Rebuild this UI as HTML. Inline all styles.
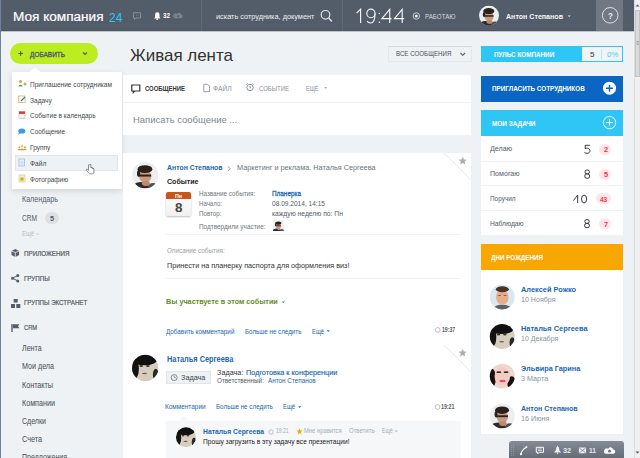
<!DOCTYPE html>
<html><head><meta charset="utf-8">
<style>
*{margin:0;padding:0;box-sizing:border-box}
html,body{width:640px;height:458px;overflow:hidden;background:#eef2f4;font-family:"Liberation Sans",sans-serif}
.a{position:absolute}
.t{position:absolute;white-space:pre;transform-origin:0 0;font-family:"Liberation Sans",sans-serif}
svg{position:absolute;overflow:visible}
</style></head><body>
<!-- left edge -->
<div class="a" style="left:0;top:0;width:1px;height:458px;background:#6f819c"></div>
<!-- header -->
<div class="a" style="left:1px;top:0;width:633px;height:31px;background:#535c69;border-bottom:1px solid #4d5561"></div>
<div class="a" style="left:1px;top:31px;width:633px;height:1px;background:rgba(83,92,105,.3)"></div>
<div class="a" style="left:201px;top:0;width:1px;height:31px;background:#616a76"></div>
<div class="a" style="left:342px;top:0;width:1px;height:31px;background:#616a76"></div>
<div class="a" style="left:596px;top:0;width:27px;height:31px;background:#717985"></div>
<svg style="left:0;top:0" width="640" height="40">
 <!-- chat icon -->
 <path d="M133.5 12.7h7v5.3h-4.5l-1.5 1.5v-1.5h-1z" fill="none" stroke="#8a929c" stroke-width="0.9"/><path d="M135.8 15.2h.8M137.6 15.2h.8" stroke="#8a929c" stroke-width="0.8"/>
 <!-- bell -->
 <path d="M154 18.5h6.5l-1-1.2v-2.8a2.2 2.2 0 0 0-4.4 0v2.8z" fill="#fff"/>
 <circle cx="157.2" cy="19.2" r="0.9" fill="#fff"/>
 <!-- cloud -->
 <path d="M174.5 18.2h6.3a1.8 1.8 0 0 0 .2-3.6a2.2 2.2 0 0 0-4.1-.7a1.8 1.8 0 0 0-2.4 4.3z" fill="#7a828c"/><circle cx="178" cy="16.3" r="1" fill="#535c69"/>
 <!-- search -->
 <circle cx="325.5" cy="14.8" r="4.3" fill="none" stroke="#dfe2e5" stroke-width="1.2"/>
 <path d="M328.6 18l3.4 3.4" stroke="#dfe2e5" stroke-width="1.4"/>
 <!-- rec -->
 <circle cx="416.3" cy="16" r="3.2" fill="none" stroke="#d0d4d8" stroke-width="0.9"/>
 <circle cx="416.3" cy="16" r="1.5" fill="#e5e7ea"/>
 <!-- caret -->
 <path d="M567.6 15.4h3.2l-1.6 1.7z" fill="#eceef0"/>
 <!-- help -->
 <circle cx="610.2" cy="15.3" r="7.8" fill="none" stroke="#e8eaec" stroke-width="0.9"/>
</svg>
<svg style="left:0;top:0" width="640" height="40">
 <g fill="none" stroke="#f4f6f8" stroke-width="1.15" stroke-linecap="butt">
  <path d="M356.6 13.2L360.6 9.2V23"/>
  <ellipse cx="370.9" cy="13.4" rx="4.1" ry="4.3"/>
  <path d="M375 13.4C375 19.5 373.6 23 370.6 23C368.9 23 367.7 22.2 367.1 21"/>
  <path d="M389.7 23V9.3L381.9 18.6H391.6"/>
  <path d="M402.2 23V9.3L394.4 18.6H404.1"/>
 </g>
 <circle cx="379.4" cy="13.6" r="0.75" fill="#f4f6f8"/>
 <circle cx="379.4" cy="22.2" r="0.75" fill="#f4f6f8"/>
</svg>
<!-- avatar header -->


<!-- scrollbar -->
<div class="a" style="left:634px;top:0;width:6px;height:458px;background:#f0f0f0;border-left:1px solid #dcdcdc"></div>
<div class="a" style="left:635px;top:10px;width:5px;height:67px;background:#dadada;border:1px solid #c4c4c4"></div>
<svg style="left:0;top:0" width="640" height="458"><path d="M635.5 6.5l2-2l2 2z M635.5 451.5l2 2l2-2z" fill="#555"/><path d="M636.5 41.5h2.5M636.5 43h2.5M636.5 44.5h2.5" stroke="#888" stroke-width="0.6"/></svg>

<!-- green button -->
<div class="a" style="left:10px;top:43px;width:88px;height:21px;border-radius:11px;background:#bbed21"></div>
<svg style="left:0;top:0" width="120" height="70">
 <path d="M18.3 53.5h4.6M20.6 51.2v4.6" stroke="#535c69" stroke-width="1.2"/>
 <path d="M83 52.5l2 2l2-2" fill="none" stroke="#535c69" stroke-width="1.1"/>
</svg>

<!-- popup -->
<div class="a" style="left:12px;top:72px;width:110px;height:117px;background:#fff;box-shadow:0 2px 6px rgba(0,0,0,.12)"></div>
<svg style="left:0;top:0" width="130" height="200">
 <path d="M29 72.5L35 67.5L41 72.5z" fill="#fff"/>
</svg>
<div class="a" style="left:15px;top:155px;width:103px;height:16px;background:#eef2f4;border:1px solid #e2e6ea"></div>
<!-- popup icons -->
<svg style="left:0;top:0" width="130" height="200">
 <circle cx="20.5" cy="81.5" r="1.6" fill="#e0a040"/>
 <path d="M18.2 86.5a2.4 2.4 0 0 1 4.6 0z" fill="#6aa03a"/>
 <path d="M23.5 84h3M25 82.5v3" stroke="#6aa03a" stroke-width="0.9"/>
 <rect x="18.5" y="96" width="6.5" height="6.5" fill="#fff" stroke="#e8b050" stroke-width="0.8"/>
 <path d="M21 101l4-4" stroke="#3070c0" stroke-width="1.1"/>
 <rect x="19" y="111.5" width="6" height="7" fill="#f2f2f2" stroke="#bbb" stroke-width="0.6"/>
 <rect x="19" y="111.5" width="6" height="2.4" fill="#d84030"/>
 <ellipse cx="21.8" cy="131" rx="3.6" ry="2.6" fill="#3a9ee0"/>
 <path d="M19 132.5l-1 2l2.5-1z" fill="#3a9ee0"/>
 <circle cx="19.4" cy="147.3" r="1" fill="#e8a030"/><circle cx="22.2" cy="146.3" r="1.1" fill="#f0b040"/><circle cx="25" cy="147.3" r="1" fill="#e8a030"/>
 <path d="M17.8 150.3a1.6 1.6 0 0 1 3.2 0z M20.4 150.3a1.8 1.8 0 0 1 3.6 0z M23.4 150.3a1.6 1.6 0 0 1 3.2 0z" fill="#d8902a"/>
 <rect x="19" y="159" width="5.5" height="7" fill="#e8f1fb" stroke="#8fb8e6" stroke-width="0.7"/>
 <path d="M20.5 162h3M20.5 164h3" stroke="#8fb8e6" stroke-width="0.6"/>
 <rect x="19" y="175" width="6" height="7" fill="#f5f0d8" stroke="#c8c090" stroke-width="0.6"/>
 <rect x="20.3" y="177.5" width="3.4" height="3.2" fill="#e0b000"/>
</svg>
<!-- hand cursor -->
<svg style="left:0;top:0" width="130" height="200">
<g transform="translate(88.5 164.8) scale(0.85) translate(-89 -165.5)"> <path d="M89 165.5v6.5l-1.3-1.2c-.8-.6-1.7.2-1.1 1l2.6 3.5c.5.6 1 .9 1.8.9h2.4c1.3 0 2-1 2-2.2v-3.6c0-.6-.9-.6-.9 0v-.7c0-.6-.9-.6-.9 0v-.5c0-.6-.9-.6-.9 0v-.4c0-.6-.9-.6-.9 0v-3.3c0-.7-.8-.7-.8 0z" fill="#fff" stroke="#222" stroke-width="0.6"/></g>
</svg>

<!-- CRM badge -->
<svg style="left:0;top:0" width="130" height="340"><path d="M36.5 234h2.2" stroke="#b8bec4" stroke-width="0.8"/></svg>
<div class="a" style="left:45px;top:212px;width:14px;height:12px;border-radius:6px;background:#dde1e5"></div>

<!-- sidebar section icons -->
<svg style="left:0;top:0" width="130" height="340">
 <path d="M11.5 251l3.8-2l3.8 2v4l-3.8 2l-3.8-2z" fill="#535c69"/>
 <path d="M15.3 252.5v4.5M11.5 251l3.8 1.5l3.8-1.5" stroke="#eef2f4" stroke-width="0.8" fill="none"/>
 <circle cx="12.5" cy="278.2" r="1.5" fill="#535c69"/><circle cx="17.8" cy="275.5" r="1.5" fill="#535c69"/><circle cx="17.8" cy="280.9" r="1.5" fill="#535c69"/>
 <path d="M12.5 278.2l5.3-2.7M12.5 278.2l5.3 2.7" stroke="#535c69" stroke-width="1"/>
 <rect x="13.7" y="299" width="4" height="3.5" fill="#535c69"/>
 <rect x="11" y="304" width="4" height="4" fill="#535c69"/>
 <rect x="16.3" y="304" width="4" height="4" fill="#535c69"/>
 <rect x="11.3" y="324" width="1.4" height="8" fill="#535c69"/>
 <path d="M13 324.3h6.5l-1.5 2l1.5 2h-6.5z" fill="#535c69"/>
</svg>

<!-- main title filter -->
<div class="a" style="left:388px;top:46px;width:84px;height:16.3px;border:1px solid #e3e7ea;border-top-color:#d6dbdf;background:#eef2f4"></div>
<svg style="left:0;top:0" width="640" height="140">
 <path d="M460.5 53l2.3 2.3l2.3-2.3" fill="none" stroke="#535c69" stroke-width="1.1"/>
</svg>

<!-- post form card -->
<div class="a" style="left:123px;top:75px;width:348px;height:60px;background:#fff"></div>
<div class="a" style="left:123px;top:102px;width:348px;height:1px;background:#eef0f2"></div>
<svg style="left:0;top:0" width="640" height="140">
 <path d="M131.8 85h8v6h-5l-1.5 1.5v-1.5h-1.5z" fill="none" stroke="#333" stroke-width="1.2"/>
 <path d="M203.8 84.3h3.8l2 2v5.4h-5.8z" fill="none" stroke="#8a929c" stroke-width="0.9"/>
 <circle cx="250" cy="87.5" r="3.2" fill="none" stroke="#8a929c" stroke-width="1"/>
 <path d="M246.3 84.6l1.5-1.2M253.7 84.6l-1.5-1.2M250 86v1.7h1.2" stroke="#8a929c" stroke-width="0.9" fill="none"/>
 <path d="M324.3 87.2h2.8l-1.4 1.6z" fill="#8a929c"/>
</svg>

<!-- feed card -->
<div class="a" style="left:123px;top:153px;width:348px;height:305px;background:#fff"></div>
<svg style="left:0;top:0" width="640" height="458">
 <path d="M444 153L471 180" stroke="#e2e5e8" stroke-width="0.8"/>
 <path d="M462.7 156.8l1.2 2.6l2.8.3l-2.1 1.9l.6 2.8l-2.5-1.4l-2.5 1.4l.6-2.8l-2.1-1.9l2.8-.3z" fill="#a8adb4"/>
 <path d="M444 345L471 372" stroke="#e2e5e8" stroke-width="0.8"/>
 <path d="M462.6 348.8l1.2 2.6l2.8.3l-2.1 1.9l.6 2.8l-2.5-1.4l-2.5 1.4l.6-2.8l-2.1-1.9l2.8-.3z" fill="#a8adb4"/>
 <path d="M166 234.5h295M166 278.5h295" stroke="#f0f2f4" stroke-width="1"/>
 
 <path d="M227.8 166.5l2.6 2.2l-2.6 2.2" fill="none" stroke="#8a929c" stroke-width="0.9"/>
 <path d="M281.8 301.6h3l-1.5 1.7z" fill="#5f8f1f"/>
 <path d="M326.7 330.3h3l-1.5 1.7z" fill="#2067b0"/>
 <circle cx="437.8" cy="330" r="2.4" fill="none" stroke="#a8adb4" stroke-width="0.8"/>
 <path d="M298.2 406.3h3l-1.5 1.7z" fill="#2067b0"/>
 <circle cx="437.5" cy="407" r="2.4" fill="none" stroke="#a8adb4" stroke-width="0.8"/>
</svg>
<!-- avatars in feed -->

<!-- calendar -->
<div class="a" style="left:166px;top:191.5px;width:25px;height:24.5px;background:linear-gradient(#fff,#f0f0f0);box-shadow:0 1px 2px rgba(0,0,0,.25);border-radius:2px"></div>
<div class="a" style="left:166px;top:191.5px;width:25px;height:7px;background:#c9541c;border-radius:2px 2px 0 0"></div>



<!-- task button -->
<div class="a" style="left:166px;top:371px;width:45px;height:13px;background:#eef2f4;border:1px solid #e2e6ea"></div>
<svg style="left:0;top:0" width="640" height="458">
 <circle cx="174.2" cy="377.6" r="3" fill="none" stroke="#6b737d" stroke-width="0.8"/>
 <path d="M174.2 375.8v1.9h1.4" stroke="#6b737d" stroke-width="0.7" fill="none"/>
</svg>
<!-- comments block -->
<div class="a" style="left:166px;top:421px;width:295px;height:37px;background:#f5f7f8"></div>
<svg style="left:0;top:0" width="640" height="458">
 <path d="M178.5 421L183.7 416L188.9 421z" fill="#f5f7f8"/>
 <circle cx="271.1" cy="432" r="2.2" fill="none" stroke="#a8adb4" stroke-width="0.7"/>
 <path d="M299.6 428.4l.9 2l2.2.2l-1.7 1.5l.5 2.1l-1.9-1.1l-1.9 1.1l.5-2.1l-1.7-1.5l2.2-.2z" fill="#f7a700"/>
 <path d="M394.8 430.6h2.8l-1.4 1.6z" fill="#a8adb4"/>
</svg>


<!-- right column -->
<div class="a" style="left:481px;top:46px;width:142px;height:16px;background:#2fc6f6"></div>
<div class="a" style="left:582px;top:47px;width:40px;height:13.5px;background:#f0f4f6"></div>
<div class="a" style="left:601px;top:49px;width:1px;height:9.5px;background:#bfe6f5"></div>
<div class="a" style="left:481px;top:76px;width:142px;height:25.5px;background:#0b66c3"></div>
<svg style="left:0;top:0" width="640" height="140">
 <circle cx="609.5" cy="88.2" r="6.5" fill="#fff"/>
 <path d="M606 88.2h7M609.5 84.7v7" stroke="#0b66c3" stroke-width="1.4"/>
</svg>
<div class="a" style="left:481px;top:110px;width:142px;height:26px;background:#2fc6f6"></div>
<svg style="left:0;top:0" width="640" height="140">
 <circle cx="609.5" cy="122.6" r="6.2" fill="none" stroke="#fff" stroke-width="0.9"/>
 <path d="M606 122.6h7M609.5 119.1v7" stroke="#fff" stroke-width="1"/>
</svg>
<div class="a" style="left:481px;top:136px;width:142px;height:99px;background:#fff"></div>
<div class="a" style="left:481px;top:160.5px;width:142px;height:1px;background:#f0f2f4"></div>
<div class="a" style="left:481px;top:185.3px;width:142px;height:1px;background:#f0f2f4"></div>
<div class="a" style="left:481px;top:210.3px;width:142px;height:1px;background:#f0f2f4"></div>
<div class="a" style="left:599.3px;top:143.6px;width:11.4px;height:11px;border-radius:6px;background:#fde5ea"></div>
<div class="a" style="left:599.3px;top:168.6px;width:11.4px;height:11px;border-radius:6px;background:#fde5ea"></div>
<div class="a" style="left:595.6px;top:193.3px;width:15.3px;height:11px;border-radius:6px;background:#fde5ea"></div>
<div class="a" style="left:599.3px;top:218.3px;width:11.4px;height:11px;border-radius:6px;background:#fde5ea"></div>

<div class="a" style="left:481px;top:244px;width:142px;height:26.5px;background:#f7a700"></div>
<div class="a" style="left:481px;top:270px;width:142px;height:163.5px;background:#fff"></div>





<!-- bottom toolbar -->
<div class="a" style="left:508.5px;top:441px;width:115.5px;height:17px;border-radius:3px 3px 0 0;background:linear-gradient(#848b94,#646c77)"></div>
<svg style="left:0;top:0" width="640" height="458">
 <path d="M511.5 445v11M513.5 445v11" stroke="#9aa1a9" stroke-width="0.7" stroke-dasharray="1 1"/>
 <path d="M520.8 454.8c.6-3.6 2.6-6.2 5.8-7.6" stroke="#fff" stroke-width="1.1" fill="none"/>
 <path d="M520.2 452.8l1.8 .6l-.6 1.9l-1.4-.3z M525.3 446.6l1.7-.6l.5 1.6l-1.6.7z" fill="#fff"/>
 <path d="M536.3 447.3h7.2v5h-4.3l-1.4 1.4v-1.4h-1.5z" fill="none" stroke="#fff" stroke-width="1"/>
 <path d="M537.9 449h4M537.9 450.6h4" stroke="#fff" stroke-width="0.7"/>
 <path d="M553.8 452.6h7.4l-1.6-1.8l-.6-2.6a1.4 1.4 0 0 0-2.8 0l-.6 2.6z" fill="#eef0f2"/>
 <path d="M557.5 445.8v1.4M557.5 452.6v1.6" stroke="#eef0f2" stroke-width="0.9"/>
 <rect x="578.9" y="447.5" width="7.2" height="5.8" fill="#eef0f2"/>
 <path d="M579.3 448l6.4 4.8M585.7 448l-6.4 4.8" stroke="#7a828c" stroke-width="0.8" fill="none"/>
 <path d="M605.5 453.8h7.5a2.1 2.1 0 0 0 .2-4.2a2.7 2.7 0 0 0-5-.9a2.1 2.1 0 0 0-2.7 5.1z" fill="#fff"/>
 <circle cx="609.5" cy="451.2" r="1.4" fill="#646c77"/>
</svg>

<svg style="left:0;top:0" width="640" height="458">
 <g fill="none" stroke="#2c3038" stroke-width="0.95">
  <path d="M589.9 145.3H585.2V148.6C586 148.2 586.8 148.1 587.5 148.2C589.2 148.5 590 149.6 590 150.9C590 152.4 588.8 153.3 587.1 153.3C586 153.3 585 152.9 584.4 152.3"/>
  <ellipse cx="587.2" cy="171.94" rx="2.24" ry="2.04"/><ellipse cx="587.2" cy="176.11" rx="2.57" ry="2.29"/>
  <path d="M573.4 200.6L577.7 195V203"/>
  <ellipse cx="584.1" cy="199" rx="2.55" ry="3.95"/>
  <ellipse cx="587.0" cy="221.49" rx="2.19" ry="1.99"/><ellipse cx="587.0" cy="225.56" rx="2.51" ry="2.24"/>
 </g>
</svg>
<svg style="left:0;top:0" width="640" height="458"><defs><clipPath id="avc0"><circle cx="489" cy="15.6" r="10"/></clipPath></defs><g clip-path="url(#avc0)"><rect x="479" y="5.6" width="20" height="20" fill="#eceef0"/><ellipse cx="485.50" cy="25.10" rx="6.50" ry="4.20" fill="#2b2b2b"/><ellipse cx="495.00" cy="24.60" rx="4.00" ry="3.00" fill="#4a5056"/><ellipse cx="489.00" cy="16.40" rx="4.60" ry="5.00" fill="#c99a7e"/><ellipse cx="488.80" cy="11.10" rx="5.60" ry="3.00" fill="#2a211d"/><ellipse cx="484.00" cy="14.40" rx="1.20" ry="2.50" fill="#2a211d"/><rect x="484.00" y="15.20" width="9.50" height="1.50" fill="#2a2220"/><ellipse cx="489.50" cy="21.80" rx="3.00" ry="2.00" fill="#c08a6e"/></g></svg>
<svg style="left:0;top:0" width="640" height="458"><defs><clipPath id="avc1"><circle cx="145.2" cy="175.1" r="13.2"/></clipPath></defs><g clip-path="url(#avc1)"><rect x="132.0" y="161.9" width="26.4" height="26.4" fill="#eceef0"/><ellipse cx="140.58" cy="187.64" rx="8.58" ry="5.54" fill="#2b2b2b"/><ellipse cx="153.12" cy="186.98" rx="5.28" ry="3.96" fill="#4a5056"/><ellipse cx="145.20" cy="176.16" rx="6.07" ry="6.60" fill="#c99a7e"/><ellipse cx="144.94" cy="169.16" rx="7.39" ry="3.96" fill="#2a211d"/><ellipse cx="138.60" cy="173.52" rx="1.58" ry="3.30" fill="#2a211d"/><rect x="138.60" y="174.57" width="12.54" height="1.98" fill="#2a2220"/><ellipse cx="145.86" cy="183.28" rx="3.96" ry="2.64" fill="#c08a6e"/></g></svg>
<svg style="left:0;top:0" width="640" height="458"><defs><clipPath id="avc2"><rect x="272.9" y="220.1" width="11.0" height="11.0"/></clipPath></defs><g clip-path="url(#avc2)"><rect x="272.9" y="220.1" width="11.0" height="11.0" fill="#eceef0"/><ellipse cx="276.47" cy="230.82" rx="3.58" ry="2.31" fill="#2b2b2b"/><ellipse cx="281.70" cy="230.55" rx="2.20" ry="1.65" fill="#4a5056"/><ellipse cx="278.40" cy="226.04" rx="2.53" ry="2.75" fill="#c99a7e"/><ellipse cx="278.29" cy="223.12" rx="3.08" ry="1.65" fill="#2a211d"/><ellipse cx="275.65" cy="224.94" rx="0.66" ry="1.38" fill="#2a211d"/><rect x="275.65" y="225.38" width="5.22" height="0.82" fill="#2a2220"/><ellipse cx="278.67" cy="229.01" rx="1.65" ry="1.10" fill="#c08a6e"/></g></svg>
<svg style="left:0;top:0" width="640" height="458"><defs><clipPath id="avc3"><circle cx="145.2" cy="368" r="13.2"/></clipPath></defs><g clip-path="url(#avc3)"><rect x="132.0" y="354.8" width="26.4" height="26.4" fill="#d6cdbf"/><ellipse cx="144.54" cy="359.82" rx="12.54" ry="5.54" fill="#111010"/><ellipse cx="134.90" cy="368.66" rx="3.96" ry="9.90" fill="#141212"/><ellipse cx="155.76" cy="374.60" rx="2.90" ry="5.94" fill="#2a2826"/><ellipse cx="141.24" cy="366.02" rx="1.85" ry="0.92" fill="#3a3430"/><ellipse cx="147.84" cy="366.02" rx="1.85" ry="0.92" fill="#3a3430"/><ellipse cx="144.54" cy="373.54" rx="2.64" ry="0.79" fill="#6a625a"/></g></svg>
<svg style="left:0;top:0" width="640" height="458"><defs><clipPath id="avc4"><circle cx="186" cy="437.2" r="10"/></clipPath></defs><g clip-path="url(#avc4)"><rect x="176" y="427.2" width="20" height="20" fill="#d6cdbf"/><ellipse cx="185.50" cy="431.00" rx="9.50" ry="4.20" fill="#111010"/><ellipse cx="178.20" cy="437.70" rx="3.00" ry="7.50" fill="#141212"/><ellipse cx="194.00" cy="442.20" rx="2.20" ry="4.50" fill="#2a2826"/><ellipse cx="183.00" cy="435.70" rx="1.40" ry="0.70" fill="#3a3430"/><ellipse cx="188.00" cy="435.70" rx="1.40" ry="0.70" fill="#3a3430"/><ellipse cx="185.50" cy="441.40" rx="2.00" ry="0.60" fill="#6a625a"/></g></svg>
<svg style="left:0;top:0" width="640" height="458"><defs><clipPath id="avc5"><circle cx="502.3" cy="297" r="12.5"/></clipPath></defs><g clip-path="url(#avc5)"><rect x="489.8" y="284.5" width="25.0" height="25.0" fill="#d8e9f2"/><ellipse cx="502.30" cy="309.50" rx="10.00" ry="4.75" fill="#5e6266"/><ellipse cx="502.30" cy="297.25" rx="6.25" ry="7.75" fill="#e6ad8e"/><ellipse cx="502.30" cy="289.25" rx="6.50" ry="3.00" fill="#4a3424"/><ellipse cx="499.55" cy="295.50" rx="1.50" ry="0.62" fill="#7a5040"/><ellipse cx="505.05" cy="295.50" rx="1.50" ry="0.62" fill="#7a5040"/></g></svg>
<svg style="left:0;top:0" width="640" height="458"><defs><clipPath id="avc6"><circle cx="502.3" cy="336.5" r="12.5"/></clipPath></defs><g clip-path="url(#avc6)"><rect x="489.8" y="324.0" width="25.0" height="25.0" fill="#d6cdbf"/><ellipse cx="501.68" cy="328.75" rx="11.88" ry="5.25" fill="#111010"/><ellipse cx="492.55" cy="337.12" rx="3.75" ry="9.38" fill="#141212"/><ellipse cx="512.30" cy="342.75" rx="2.75" ry="5.62" fill="#2a2826"/><ellipse cx="498.55" cy="334.62" rx="1.75" ry="0.88" fill="#3a3430"/><ellipse cx="504.80" cy="334.62" rx="1.75" ry="0.88" fill="#3a3430"/><ellipse cx="501.68" cy="341.75" rx="2.50" ry="0.75" fill="#6a625a"/></g></svg>
<svg style="left:0;top:0" width="640" height="458"><defs><clipPath id="avc7"><circle cx="502.3" cy="376.2" r="12.5"/></clipPath></defs><g clip-path="url(#avc7)"><rect x="489.8" y="363.7" width="25.0" height="25.0" fill="#efd6d0"/><ellipse cx="492.05" cy="378.07" rx="3.75" ry="9.38" fill="#151111"/><ellipse cx="511.68" cy="383.07" rx="4.38" ry="6.88" fill="#151111"/><ellipse cx="502.30" cy="376.45" rx="7.75" ry="9.38" fill="#f2cec2"/><ellipse cx="498.80" cy="372.20" rx="2.50" ry="0.88" fill="#3a2a30"/><ellipse cx="506.05" cy="372.20" rx="2.50" ry="0.88" fill="#3a2a30"/><ellipse cx="502.55" cy="380.95" rx="3.12" ry="1.25" fill="#ee4a74"/></g></svg>
<svg style="left:0;top:0" width="640" height="458"><defs><clipPath id="avc8"><circle cx="502.3" cy="415.8" r="12.5"/></clipPath></defs><g clip-path="url(#avc8)"><rect x="489.8" y="403.3" width="25.0" height="25.0" fill="#eceef0"/><ellipse cx="497.93" cy="427.68" rx="8.12" ry="5.25" fill="#2b2b2b"/><ellipse cx="509.80" cy="427.05" rx="5.00" ry="3.75" fill="#4a5056"/><ellipse cx="502.30" cy="416.80" rx="5.75" ry="6.25" fill="#c99a7e"/><ellipse cx="502.05" cy="410.18" rx="7.00" ry="3.75" fill="#2a211d"/><ellipse cx="496.05" cy="414.30" rx="1.50" ry="3.12" fill="#2a211d"/><rect x="496.05" y="415.30" width="11.88" height="1.88" fill="#2a2220"/><ellipse cx="502.93" cy="423.55" rx="3.75" ry="2.50" fill="#c08a6e"/></g></svg>
<span class="t" style="left:13.10px;top:10.72px;font-size:12.5px;line-height:12.5px;font-weight:400;color:#fff;transform:scaleX(1.0867);-webkit-text-stroke:0.2px #fff;">Моя компания</span>
<span class="t" style="left:108.60px;top:10.70px;font-size:13px;line-height:13px;font-weight:400;color:#2fc6f6;transform:scaleX(0.9192);">24</span>
<span class="t" style="left:162.80px;top:13.20px;font-size:6.5px;line-height:6.5px;font-weight:700;color:#fff;transform:scaleX(0.9676);">32</span>
<span class="t" style="left:215.60px;top:12.53px;font-size:8px;line-height:8px;font-weight:400;color:#eef0f2;transform:scaleX(0.9164);">искать сотрудника, документ</span>
<span class="t" style="left:424.70px;top:13.54px;font-size:6.8px;line-height:6.8px;font-weight:400;color:#d6dade;transform:scaleX(0.9105);">РАБОТАЮ</span>
<span class="t" style="left:506.00px;top:12.98px;font-size:7.7px;line-height:7.7px;font-weight:700;color:#f6f7f8;transform:scaleX(0.9205);">Антон Степанов</span>
<span class="t" style="left:607.80px;top:11.58px;font-size:9px;line-height:9px;font-weight:700;color:#eceef0;transform:scaleX(0.8727);">?</span>
<span class="t" style="left:30.00px;top:50.77px;font-size:7px;line-height:7px;font-weight:400;color:#535c69;transform:scaleX(0.9241);-webkit-text-stroke:0.35px #535c69;">ДОБАВИТЬ</span>
<span class="t" style="left:30.00px;top:80.93px;font-size:8px;line-height:8px;font-weight:400;color:#3f4650;transform:scaleX(0.8178);">Приглашение сотрудникам</span>
<span class="t" style="left:30.00px;top:96.70px;font-size:8px;line-height:8px;font-weight:400;color:#3f4650;transform:scaleX(0.8261);">Задачу</span>
<span class="t" style="left:30.00px;top:112.47px;font-size:8px;line-height:8px;font-weight:400;color:#3f4650;transform:scaleX(0.8063);">Событие в календарь</span>
<span class="t" style="left:30.00px;top:128.24px;font-size:8px;line-height:8px;font-weight:400;color:#3f4650;transform:scaleX(0.8037);">Сообщение</span>
<span class="t" style="left:30.00px;top:144.01px;font-size:8px;line-height:8px;font-weight:400;color:#3f4650;transform:scaleX(0.8191);">Группу</span>
<span class="t" style="left:30.00px;top:159.78px;font-size:8px;line-height:8px;font-weight:400;color:#3f4650;transform:scaleX(0.8286);">Файл</span>
<span class="t" style="left:30.00px;top:175.55px;font-size:8px;line-height:8px;font-weight:400;color:#3f4650;transform:scaleX(0.8042);">Фотографию</span>
<span class="t" style="left:22.00px;top:195.30px;font-size:8.5px;line-height:8.5px;font-weight:400;color:#535c69;transform:scaleX(0.8390);">Календарь</span>
<span class="t" style="left:22.00px;top:213.50px;font-size:8.5px;line-height:8.5px;font-weight:400;color:#535c69;transform:scaleX(0.7748);">CRM</span>
<span class="t" style="left:50.00px;top:215.27px;font-size:7px;line-height:7px;font-weight:700;color:#535c69;transform:scaleX(1.0240);">5</span>
<span class="t" style="left:22.00px;top:230.15px;font-size:7.5px;line-height:7.5px;font-weight:400;color:#b8bec4;transform:scaleX(0.7813);">Ещё</span>
<span class="t" style="left:23.50px;top:250.53px;font-size:6.7px;line-height:6.7px;font-weight:400;color:#535c69;transform:scaleX(0.9357);-webkit-text-stroke:0.2px #535c69;">ПРИЛОЖЕНИЯ</span>
<span class="t" style="left:23.50px;top:275.53px;font-size:6.7px;line-height:6.7px;font-weight:400;color:#535c69;transform:scaleX(0.9272);-webkit-text-stroke:0.2px #535c69;">ГРУППЫ</span>
<span class="t" style="left:23.50px;top:300.03px;font-size:6.7px;line-height:6.7px;font-weight:400;color:#535c69;transform:scaleX(0.9193);-webkit-text-stroke:0.2px #535c69;">ГРУППЫ ЭКСТРАНЕТ</span>
<span class="t" style="left:23.50px;top:325.33px;font-size:6.7px;line-height:6.7px;font-weight:400;color:#535c69;transform:scaleX(0.8599);-webkit-text-stroke:0.2px #535c69;">CRM</span>
<span class="t" style="left:22.00px;top:343.80px;font-size:8.5px;line-height:8.5px;font-weight:400;color:#454b55;transform:scaleX(0.8329);">Лента</span>
<span class="t" style="left:22.00px;top:362.00px;font-size:8.5px;line-height:8.5px;font-weight:400;color:#454b55;transform:scaleX(0.8397);">Мои дела</span>
<span class="t" style="left:22.00px;top:380.50px;font-size:8.5px;line-height:8.5px;font-weight:400;color:#454b55;transform:scaleX(0.8443);">Контакты</span>
<span class="t" style="left:22.00px;top:398.50px;font-size:8.5px;line-height:8.5px;font-weight:400;color:#454b55;transform:scaleX(0.8426);">Компании</span>
<span class="t" style="left:22.00px;top:416.80px;font-size:8.5px;line-height:8.5px;font-weight:400;color:#454b55;transform:scaleX(0.8280);">Сделки</span>
<span class="t" style="left:22.00px;top:435.00px;font-size:8.5px;line-height:8.5px;font-weight:400;color:#454b55;transform:scaleX(0.8528);">Счета</span>
<span class="t" style="left:22.00px;top:453.30px;font-size:8.5px;line-height:8.5px;font-weight:400;color:#454b55;transform:scaleX(0.8259);">Предложения</span>
<span class="t" style="left:129.50px;top:46.81px;font-size:17px;line-height:17px;font-weight:400;color:#333;transform:scaleX(0.9977);">Живая лента</span>
<span class="t" style="left:395.60px;top:51.20px;font-size:6.5px;line-height:6.5px;font-weight:400;color:#4a4f62;transform:scaleX(0.9490);">ВСЕ СООБЩЕНИЯ</span>
<span class="t" style="left:144.60px;top:85.60px;font-size:6.5px;line-height:6.5px;font-weight:700;color:#333;transform:scaleX(0.9071);">СООБЩЕНИЕ</span>
<span class="t" style="left:213.00px;top:85.60px;font-size:6.5px;line-height:6.5px;font-weight:400;color:#8a929c;transform:scaleX(1.0399);">ФАЙЛ</span>
<span class="t" style="left:259.00px;top:85.60px;font-size:6.5px;line-height:6.5px;font-weight:400;color:#8a929c;transform:scaleX(0.9200);">СОБЫТИЕ</span>
<span class="t" style="left:306.00px;top:85.60px;font-size:6.5px;line-height:6.5px;font-weight:400;color:#8a929c;transform:scaleX(0.8457);">ЕЩЁ</span>
<span class="t" style="left:132.80px;top:116.28px;font-size:9px;line-height:9px;font-weight:400;color:#80878f;transform:scaleX(1.0514);">Написать сообщение ...</span>
<span class="t" style="left:166.50px;top:163.83px;font-size:8px;line-height:8px;font-weight:700;color:#2067b0;transform:scaleX(0.8613);">Антон Степанов</span>
<span class="t" style="left:236.50px;top:163.83px;font-size:8px;line-height:8px;font-weight:400;color:#6b737d;transform:scaleX(0.9100);">Маркетинг и реклама. Наталья Сергеева</span>
<span class="t" style="left:166.50px;top:177.93px;font-size:8px;line-height:8px;font-weight:700;color:#222;transform:scaleX(0.8815);">Событие</span>
<span class="t" style="left:175.00px;top:192.92px;font-size:6px;line-height:6px;font-weight:700;color:#fff;transform:scaleX(0.8819);">Пн</span>
<span class="t" style="left:175.00px;top:201.10px;font-size:13px;line-height:13px;font-weight:700;color:#444;transform:scaleX(1.0367);">8</span>
<span class="t" style="left:198.50px;top:190.05px;font-size:7.5px;line-height:7.5px;font-weight:400;color:#6f7580;transform:scaleX(0.8380);">Название события:</span>
<span class="t" style="left:198.50px;top:199.95px;font-size:7.5px;line-height:7.5px;font-weight:400;color:#6f7580;transform:scaleX(0.8151);">Начало:</span>
<span class="t" style="left:198.50px;top:210.35px;font-size:7.5px;line-height:7.5px;font-weight:400;color:#6f7580;transform:scaleX(0.8281);">Повтор:</span>
<span class="t" style="left:198.50px;top:222.85px;font-size:7.5px;line-height:7.5px;font-weight:400;color:#6f7580;transform:scaleX(0.8531);">Подтвердили участие:</span>
<span class="t" style="left:272.00px;top:190.05px;font-size:7.5px;line-height:7.5px;font-weight:400;color:#2067b0;transform:scaleX(0.8518);-webkit-text-stroke:0.3px #2067b0;">Планерка</span>
<span class="t" style="left:272.00px;top:199.95px;font-size:7.5px;line-height:7.5px;font-weight:400;color:#535c69;transform:scaleX(0.8763);">08.09.2014, 14:15</span>
<span class="t" style="left:272.00px;top:210.35px;font-size:7.5px;line-height:7.5px;font-weight:400;color:#535c69;transform:scaleX(0.8982);">каждую неделю по: Пн</span>
<span class="t" style="left:166.60px;top:248.20px;font-size:6.5px;line-height:6.5px;font-weight:400;color:#9aa0a6;transform:scaleX(0.9799);">Описание события:</span>
<span class="t" style="left:166.60px;top:262.33px;font-size:8px;line-height:8px;font-weight:400;color:#333;transform:scaleX(0.9023);">Принести на планерку паспорта для оформления виз!</span>
<span class="t" style="left:166.20px;top:297.53px;font-size:8px;line-height:8px;font-weight:700;color:#5f8f1f;transform:scaleX(0.9031);">Вы участвуете в этом событии</span>
<span class="t" style="left:166.20px;top:327.65px;font-size:7.5px;line-height:7.5px;font-weight:400;color:#2067b0;transform:scaleX(0.8396);">Добавить комментарий</span>
<span class="t" style="left:245.00px;top:327.65px;font-size:7.5px;line-height:7.5px;font-weight:400;color:#2067b0;transform:scaleX(0.8304);">Больше не следить</span>
<span class="t" style="left:311.80px;top:327.65px;font-size:7.5px;line-height:7.5px;font-weight:400;color:#2067b0;transform:scaleX(0.7878);">Ещё</span>
<span class="t" style="left:441.90px;top:327.40px;font-size:6.5px;line-height:6.5px;font-weight:700;color:#535c69;transform:scaleX(0.7880);">19:37</span>
<span class="t" style="left:166.50px;top:355.00px;font-size:8.5px;line-height:8.5px;font-weight:700;color:#2067b0;transform:scaleX(0.8654);">Наталья Сергеева</span>
<span class="t" style="left:180.80px;top:374.23px;font-size:8px;line-height:8px;font-weight:400;color:#3d434c;transform:scaleX(0.9090);">Задача</span>
<span class="t" style="left:217.10px;top:368.95px;font-size:7.5px;line-height:7.5px;font-weight:400;color:#333;transform:scaleX(0.9688);">Задача:</span>
<span class="t" style="left:245.60px;top:368.95px;font-size:7.5px;line-height:7.5px;font-weight:400;color:#2067b0;transform:scaleX(0.9712);-webkit-text-stroke:0.15px #2067b0;">Подготовка к конференции</span>
<span class="t" style="left:217.00px;top:377.35px;font-size:7.5px;line-height:7.5px;font-weight:400;color:#535c69;transform:scaleX(0.8427);">Ответственный:</span>
<span class="t" style="left:268.00px;top:377.35px;font-size:7.5px;line-height:7.5px;font-weight:400;color:#2067b0;transform:scaleX(0.8461);">Антон Степанов</span>
<span class="t" style="left:165.40px;top:403.35px;font-size:7.5px;line-height:7.5px;font-weight:400;color:#2067b0;transform:scaleX(0.8593);">Комментарии</span>
<span class="t" style="left:216.00px;top:403.35px;font-size:7.5px;line-height:7.5px;font-weight:400;color:#2067b0;transform:scaleX(0.8363);">Больше не следить</span>
<span class="t" style="left:283.40px;top:403.35px;font-size:7.5px;line-height:7.5px;font-weight:400;color:#2067b0;transform:scaleX(0.7878);">Ещё</span>
<span class="t" style="left:441.30px;top:403.80px;font-size:6.5px;line-height:6.5px;font-weight:700;color:#535c69;transform:scaleX(0.8060);">19:21</span>
<span class="t" style="left:202.80px;top:428.15px;font-size:7.5px;line-height:7.5px;font-weight:700;color:#2067b0;transform:scaleX(0.9025);">Наталья Сергеева</span>
<span class="t" style="left:275.80px;top:428.20px;font-size:6.5px;line-height:6.5px;font-weight:400;color:#a8adb4;transform:scaleX(0.7739);">19:21</span>
<span class="t" style="left:304.30px;top:428.20px;font-size:6.5px;line-height:6.5px;font-weight:400;color:#a8adb4;transform:scaleX(0.8973);">Мне нравится</span>
<span class="t" style="left:348.50px;top:428.20px;font-size:6.5px;line-height:6.5px;font-weight:400;color:#a8adb4;transform:scaleX(0.9174);">Ответить</span>
<span class="t" style="left:382.00px;top:428.20px;font-size:6.5px;line-height:6.5px;font-weight:400;color:#a8adb4;transform:scaleX(0.8113);">Ещё</span>
<span class="t" style="left:202.80px;top:437.65px;font-size:7.5px;line-height:7.5px;font-weight:400;color:#222;transform:scaleX(0.8839);">Прошу загрузить в эту задачу все презентации!</span>
<span class="t" style="left:494.00px;top:51.54px;font-size:6.8px;line-height:6.8px;font-weight:700;color:#fff;transform:scaleX(0.9302);">ПУЛЬС КОМПАНИИ</span>
<span class="t" style="left:589.50px;top:51.00px;font-size:7.8px;line-height:7.8px;font-weight:400;color:#333;transform:scaleX(1.0360);">5</span>
<span class="t" style="left:607.30px;top:51.35px;font-size:7.5px;line-height:7.5px;font-weight:400;color:#4ccaf2;transform:scaleX(1.0421);">0%</span>
<span class="t" style="left:491.60px;top:85.35px;font-size:7.5px;line-height:7.5px;font-weight:700;color:#fff;transform:scaleX(0.8426);">ПРИГЛАСИТЬ СОТРУДНИКОВ</span>
<span class="t" style="left:491.60px;top:120.58px;font-size:6.4px;line-height:6.4px;font-weight:700;color:#fff;transform:scaleX(1.0024);">МОИ ЗАДАЧИ</span>
<span class="t" style="left:490.40px;top:144.63px;font-size:8px;line-height:8px;font-weight:400;color:#535c69;transform:scaleX(0.8981);">Делаю</span>
<span class="t" style="left:603.50px;top:146.70px;font-size:6.5px;line-height:6.5px;font-weight:700;color:#f0374b;transform:scaleX(1.1310);">2</span>
<span class="t" style="left:490.40px;top:169.63px;font-size:8px;line-height:8px;font-weight:400;color:#535c69;transform:scaleX(0.8877);">Помогаю</span>
<span class="t" style="left:603.50px;top:171.70px;font-size:6.5px;line-height:6.5px;font-weight:700;color:#f0374b;transform:scaleX(1.1310);">5</span>
<span class="t" style="left:490.40px;top:194.63px;font-size:8px;line-height:8px;font-weight:400;color:#535c69;transform:scaleX(0.8031);">Поручил</span>
<span class="t" style="left:599.70px;top:196.70px;font-size:6.5px;line-height:6.5px;font-weight:700;color:#f0374b;transform:scaleX(0.9814);">43</span>
<span class="t" style="left:490.40px;top:219.63px;font-size:8px;line-height:8px;font-weight:400;color:#535c69;transform:scaleX(0.8387);">Наблюдаю</span>
<span class="t" style="left:603.50px;top:221.70px;font-size:6.5px;line-height:6.5px;font-weight:700;color:#f0374b;transform:scaleX(1.1310);">7</span>
<span class="t" style="left:491.00px;top:254.88px;font-size:6.4px;line-height:6.4px;font-weight:700;color:#fff;transform:scaleX(0.9811);">ДНИ РОЖДЕНИЯ</span>
<span class="t" style="left:520.50px;top:285.63px;font-size:8px;line-height:8px;font-weight:700;color:#2067b0;transform:scaleX(0.9258);">Алексей Рожко</span>
<span class="t" style="left:520.50px;top:295.73px;font-size:8px;line-height:8px;font-weight:400;color:#8a929c;transform:scaleX(0.8857);">10 Ноября</span>
<span class="t" style="left:520.50px;top:325.43px;font-size:8px;line-height:8px;font-weight:700;color:#2067b0;transform:scaleX(0.9224);">Наталья Сергеева</span>
<span class="t" style="left:520.50px;top:335.43px;font-size:8px;line-height:8px;font-weight:400;color:#8a929c;transform:scaleX(0.8799);">10 Декабря</span>
<span class="t" style="left:520.50px;top:365.23px;font-size:8px;line-height:8px;font-weight:700;color:#2067b0;transform:scaleX(0.9143);">Эльвира Гарина</span>
<span class="t" style="left:520.50px;top:375.13px;font-size:8px;line-height:8px;font-weight:400;color:#8a929c;transform:scaleX(0.9015);">3 Марта</span>
<span class="t" style="left:520.50px;top:405.03px;font-size:8px;line-height:8px;font-weight:700;color:#2067b0;transform:scaleX(0.8799);">Антон Степанов</span>
<span class="t" style="left:520.50px;top:414.83px;font-size:8px;line-height:8px;font-weight:400;color:#8a929c;transform:scaleX(0.9012);">16 Июня</span>
<span class="t" style="left:562.90px;top:447.80px;font-size:6.5px;line-height:6.5px;font-weight:700;color:#e8eaec;transform:scaleX(1.1197);">32</span>
<span class="t" style="left:589.00px;top:447.80px;font-size:6.5px;line-height:6.5px;font-weight:700;color:#e8eaec;transform:scaleX(1.0182);">11</span>
</body></html>
